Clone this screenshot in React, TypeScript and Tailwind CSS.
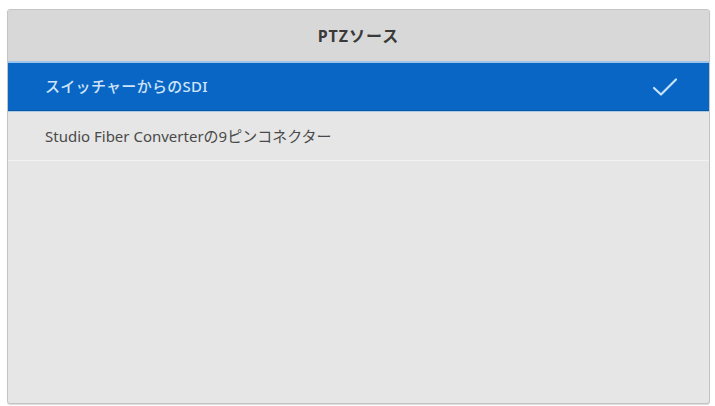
import React from 'react';

const font = { fontFamily: '"Noto Sans", "Noto Sans CJK JP", sans-serif' };

export default function App() {
  return (
    <div className="w-[715px] h-[406px] bg-white pt-[9px] pl-[7px] pr-[5px] pb-[2px]" style={font}>
      <div className="flex flex-col h-[395px] rounded-[3px] border border-[#c4c4c4] bg-[#e6e6e6] overflow-hidden shadow-[0_1px_1px_rgba(0,0,0,0.15)]">
        <div className="h-[51px] flex items-center justify-center bg-[#d8d8d8] text-[16px] font-bold text-[#3a3a3a] tracking-[1px]">
          PTZソース
        </div>
        <div className="h-[50px] flex items-center justify-between pl-[37px] pr-[31px] bg-[#0a66c4] border-t-2 border-[#9cc3ea] border-b border-b-[#0a58a8] text-[15px] font-medium text-[#cfe4fa]">
          <span className="tracking-[0.3px]">スイッチャーからのSDI</span>
          <svg width="26" height="20" viewBox="0 0 26 20" fill="none">
            <path d="M2 11 L9 17.5 L24 2.5" stroke="#c5e2ff" strokeWidth="2.2" strokeLinecap="round" strokeLinejoin="round" />
          </svg>
        </div>
        <div className="h-[50px] flex items-center pl-[37px] border-t border-[#a9c7e6] border-b border-b-[#f2f2f2] text-[15px] text-[#4a4a4a]">
          Studio Fiber Converterの9ピンコネクター
        </div>
        <div className="flex-1" />
      </div>
    </div>
  );
}
